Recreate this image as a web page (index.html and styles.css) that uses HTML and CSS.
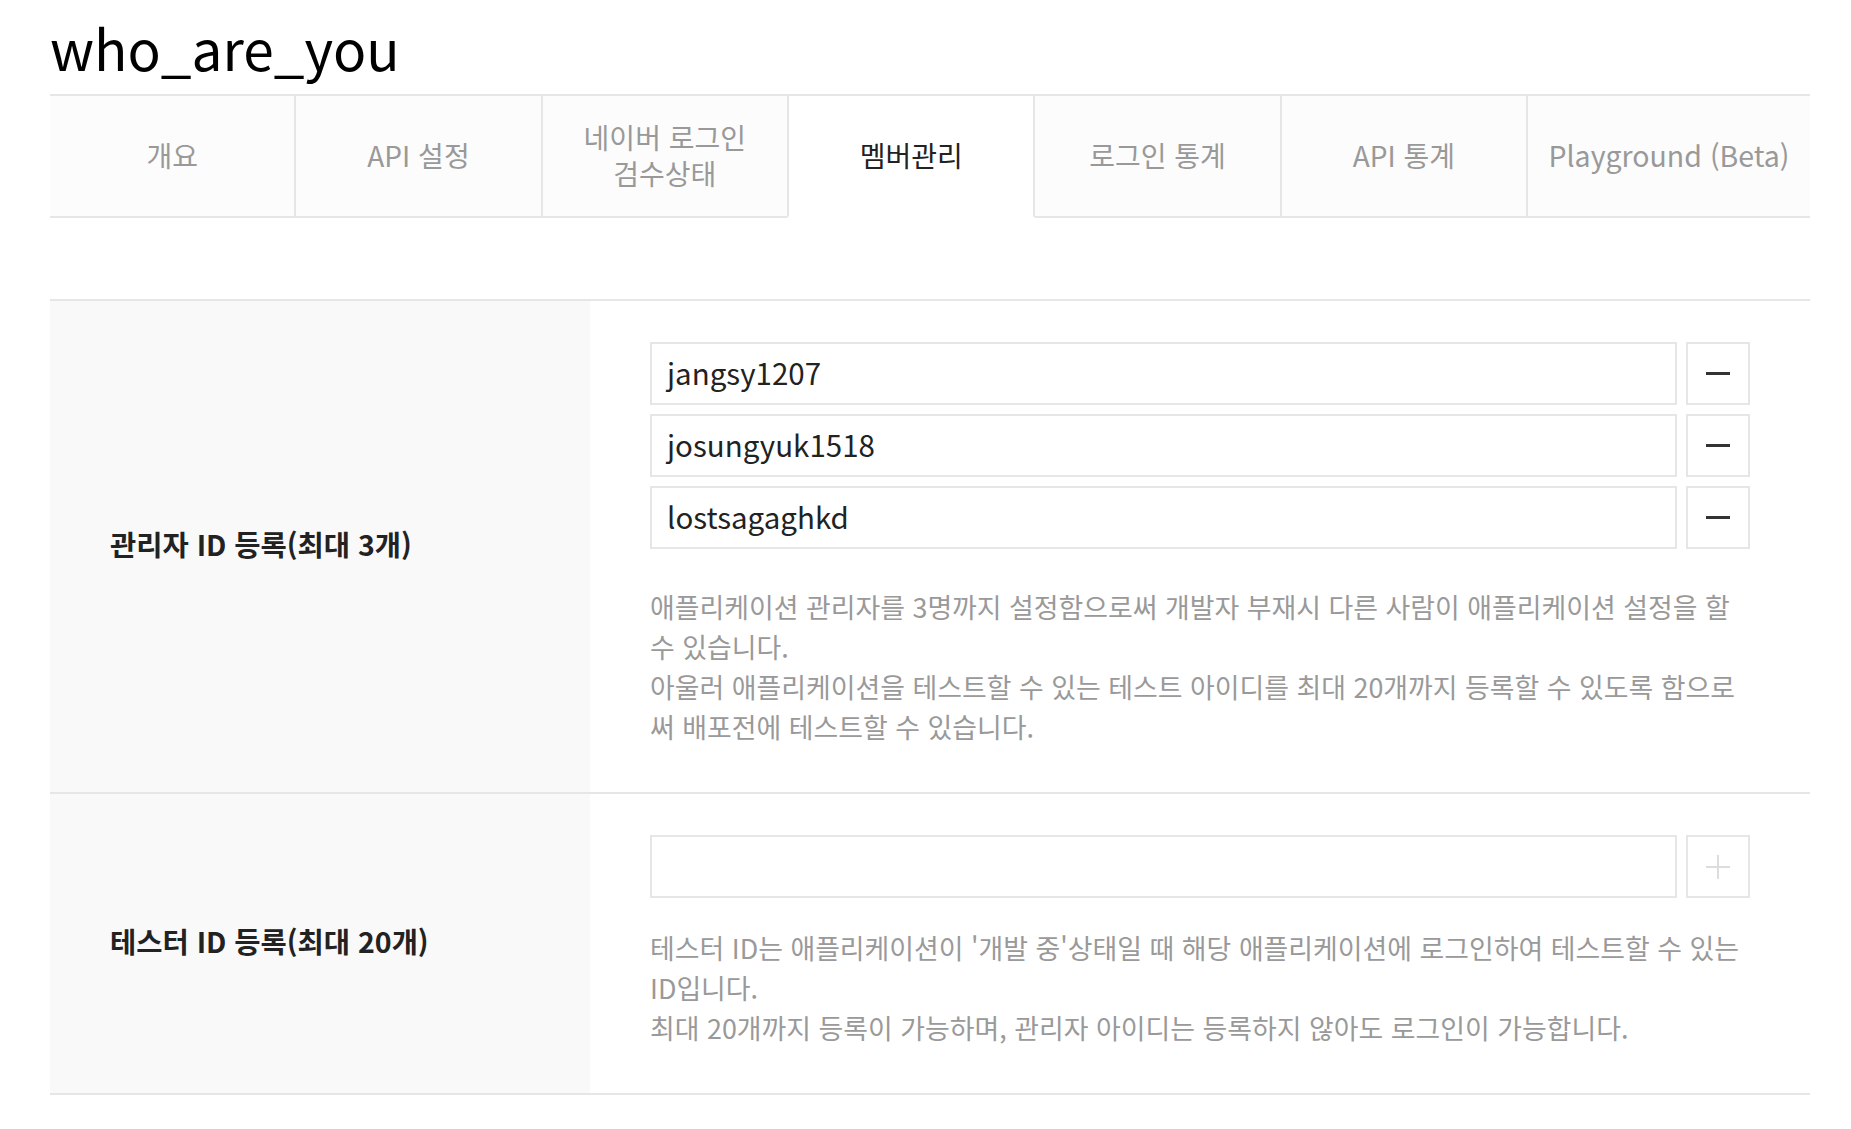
FILE: index.html
```html
<!DOCTYPE html>
<html lang="ko">
<head>
<meta charset="utf-8">
<title>who_are_you - 멤버관리</title>
<link rel="stylesheet" href="styles.css">
</head>
<body>
<div class="page">
  <h1 class="app-title">who_are_you</h1>
  <ul class="tabs">
    <li class="tab">개요</li>
    <li class="tab">API 설정</li>
    <li class="tab">네이버 로그인<br>검수상태</li>
    <li class="tab active">멤버관리</li>
    <li class="tab">로그인 통계</li>
    <li class="tab">API 통계</li>
    <li class="tab tab-wide">Playground (Beta)</li>
  </ul>

  <div class="form-table">
    <div class="row">
      <div class="row-label">관리자 ID 등록(최대 3개)</div>
      <div class="row-body">
        <div class="id-list">
          <div class="id-item">
            <div class="id-input">jangsy1207</div>
            <button class="id-btn" type="button"><span class="minus"></span></button>
          </div>
          <div class="id-item">
            <div class="id-input">josungyuk1518</div>
            <button class="id-btn" type="button"><span class="minus"></span></button>
          </div>
          <div class="id-item">
            <div class="id-input">lostsagaghkd</div>
            <button class="id-btn" type="button"><span class="minus"></span></button>
          </div>
        </div>
        <p class="desc">애플리케이션 관리자를 3명까지 설정함으로써 개발자 부재시 다른 사람이 애플리케이션 설정을 할 수 있습니다.<br>아울러 애플리케이션을 테스트할 수 있는 테스트 아이디를 최대 20개까지 등록할 수 있도록 함으로써 배포전에 테스트할 수 있습니다.</p>
      </div>
    </div>
    <div class="row">
      <div class="row-label">테스터 ID 등록(최대 20개)</div>
      <div class="row-body">
        <div class="id-list">
          <div class="id-item">
            <div class="id-input"></div>
            <button class="id-btn add" type="button"><span class="plus"></span></button>
          </div>
        </div>
        <p class="desc desc-tester">테스터 ID는 애플리케이션이 '개발 중'상태일 때 해당 애플리케이션에 로그인하여 테스트할 수 있는 ID입니다.<br>최대 20개까지 등록이 가능하며, 관리자 아이디는 등록하지 않아도 로그인이 가능합니다.</p>
      </div>
    </div>
  </div>
</div>
</body>
</html>
```

FILE: styles.css
```css
html, body {
  margin: 0;
  padding: 0;
  background: #fff;
}
body {
  font-family: "Noto Sans CJK KR", "Noto Sans", sans-serif;
  color: #222;
}
.page {
  width: 1760px;
  padding: 0 0 0 50px;
}
.app-title {
  margin: 0;
  height: 94px;
  font-size: 55px;
  font-weight: 400;
  line-height: 94px;
  color: #000;
}
.tabs {
  list-style: none;
  margin: 0;
  padding: 0;
  display: flex;
  border-top: 2px solid #e6e6e6;
}
.tab {
  flex: 1 1 0;
  height: 118px;
  padding-bottom: 2px;
  display: flex;
  align-items: center;
  justify-content: center;
  text-align: center;
  font-size: 28px;
  line-height: 36px;
  color: #999;
  background: #fcfcfc;
  border-bottom: 2px solid #e6e6e6;
  border-left: 2px solid #e6e6e6;
}
.tab:first-child {
  border-left: 0;
}
.tab.tab-wide {
  flex: 0 0 282px;
  font-size: 28.5px;
}
.tab.active {
  background: #fff;
  color: #222;
  border-bottom-color: transparent;
  border-right: 2px solid #e6e6e6;
}
.tab.active + .tab {
  border-left: 0;
}
.form-table {
  margin-top: 81px;
  border-top: 2px solid #e6e6e6;
}
.row {
  display: flex;
  border-bottom: 2px solid #e6e6e6;
}
.row-label {
  flex: 0 0 540px;
  background: #f9f9f9;
  display: flex;
  align-items: center;
  padding-left: 60px;
  padding-bottom: 6px;
  box-sizing: border-box;
  font-size: 28.5px;
  font-weight: 700;
  color: #222;
}
.row-body {
  flex: 1 1 auto;
  padding: 41px 60px 45px 60px;
}
.id-list {
  display: flex;
  flex-direction: column;
  gap: 9px;
}
.id-item {
  display: flex;
  gap: 9px;
  height: 63px;
}
.id-input {
  flex: 1 1 auto;
  border: 2px solid #e6e6e6;
  box-sizing: border-box;
  padding: 0 15px 3px;
  display: flex;
  align-items: center;
  font-size: 29.5px;
  color: #222;
}
.id-btn {
  flex: 0 0 64px;
  height: 63px;
  border: 2px solid #e6e6e6;
  background: #fff;
  padding: 0;
  display: flex;
  align-items: center;
  justify-content: center;
  box-sizing: border-box;
}
.minus {
  display: block;
  width: 24px;
  height: 3px;
  background: #333;
}
.plus {
  display: block;
  width: 24px;
  height: 24px;
  position: relative;
}
.plus::before,
.plus::after {
  content: "";
  position: absolute;
  background: #ddd;
}
.plus::before {
  left: 0;
  top: 11px;
  width: 24px;
  height: 2px;
}
.plus::after {
  left: 11px;
  top: 0;
  width: 2px;
  height: 24px;
}
.desc {
  margin: 38px 0 0;
  font-size: 26.9px;
  line-height: 40px;
  color: #999;
}
.desc-tester {
  margin-top: 30px;
}
```
